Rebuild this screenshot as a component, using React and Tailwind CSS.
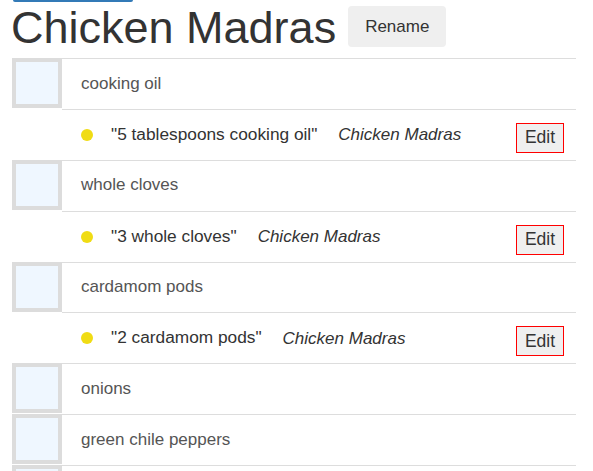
import React from "react";

const items = [
  { name: "cooking oil", sub: '"5 tablespoons cooking oil"' },
  { name: "whole cloves", sub: '"3 whole cloves"' },
  { name: "cardamom pods", sub: '"2 cardamom pods"' },
  { name: "onions" },
  { name: "green chile peppers" },
  { name: "" },
];

function Box() {
  return (
    <div className="w-[50px] h-[50px] shrink-0 -mt-px border-4 border-[#dcdcdc] bg-[#eff7ff]" />
  );
}

export default function App() {
  return (
    <div
      className="h-[471px] overflow-hidden bg-white pl-[12px] w-[576px]"
      style={{ fontFamily: '"Liberation Sans", Arial, sans-serif' }}
    >
      <div className="h-[2px] w-[120px] ml-px bg-[#337ab7] rounded-b-[3px]" />
      <div className="flex items-start h-[56px]">
        <h1 className="text-[45px] leading-[50px] mt-[1px] -ml-px text-[#333] font-normal">
          Chicken Madras
        </h1>
        <button className="ml-[12px] mt-[4px] h-[41px] px-[17px] bg-[#efefef] rounded-[4px] text-[17px] text-[#333]">
          Rename
        </button>
      </div>
      <ul>
        {items.map((it, i) => (
          <li key={i}>
            <div className="flex items-start h-[50.875px] border-t border-[#dddddd] box-border">
              <Box />
              {it.name && (
                <span className="pl-[19px] self-center -mt-px text-[17px] text-[#555]">
                  {it.name}
                </span>
              )}
            </div>
            {it.sub && (
              <div className="ml-[50px] flex items-center h-[50.875px] border-t border-[#dddddd] box-border pl-[19px]">
                <span className="w-[12px] h-[12px] rounded-full bg-[#f0dc14] shrink-0" />
                <span className="ml-[18px] text-[17.3px] text-[#333]">{it.sub}</span>
                <i className="ml-[21px] text-[17px] text-[#333]">Chicken Madras</i>
                <button className="ml-auto mr-[12px] mt-[6px] h-[30px] w-[48px] border border-[#ff0000] bg-[#efefef] text-[17.5px] text-[#333] leading-none">
                  Edit
                </button>
              </div>
            )}
          </li>
        ))}
      </ul>
    </div>
  );
}
